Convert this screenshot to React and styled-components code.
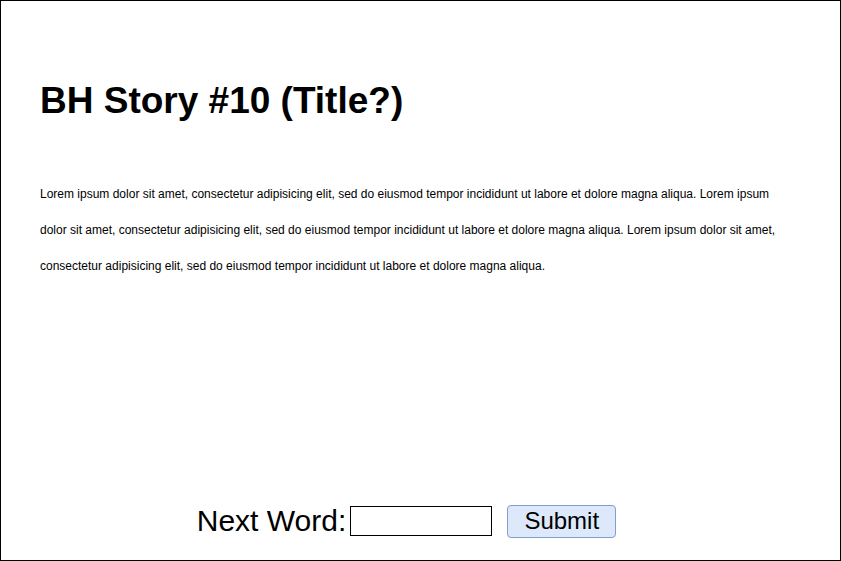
import React from "react";
import styled, { createGlobalStyle } from "styled-components";

const GlobalStyle = createGlobalStyle`
  html, body {
    margin: 0;
    padding: 0;
    background: #fff;
  }
  body {
    font-family: "Liberation Sans", Arial, sans-serif;
    color: #000;
  }
`;

const story =
  "Lorem ipsum dolor sit amet, consectetur adipisicing elit, sed do eiusmod tempor incididunt ut labore et dolore magna aliqua. Lorem ipsum dolor sit amet, consectetur adipisicing elit, sed do eiusmod tempor incididunt ut labore et dolore magna aliqua. Lorem ipsum dolor sit amet, consectetur adipisicing elit, sed do eiusmod tempor incididunt ut labore et dolore magna aliqua.";

function App() {
  return (
    <>
      <GlobalStyle />
      <StoryPage>
        <StoryTitle>BH Story #10 (Title?)</StoryTitle>
        <StoryText>{story}</StoryText>
        <WordForm onSubmit={(e) => e.preventDefault()}>
          <WordLabel htmlFor="next-word">Next Word:</WordLabel>
          <WordInput id="next-word" type="text" />
          <SubmitButton type="submit">Submit</SubmitButton>
        </WordForm>
      </StoryPage>
    </>
  );
}

export default App;

const StoryPage = styled.div`
  box-sizing: border-box;
  width: 841px;
  height: 561px;
  border: 1px solid #000;
  padding: 0 40px 0 39px;
  display: flex;
  flex-direction: column;
`;

const StoryTitle = styled.h1`
  margin: 79px 0 0;
  font-size: 37px;
  font-weight: bold;
  line-height: 42px;
`;

const StoryText = styled.p`
  max-width: 745px;
  margin: 54px 0 0;
  font-size: 12px;
  line-height: 36px;
`;

const WordForm = styled.form`
  margin-top: auto;
  margin-bottom: 22px;
  display: flex;
  align-items: center;
  justify-content: center;
  padding-right: 27px;
`;

const WordLabel = styled.label`
  font-size: 30px;
  line-height: 34px;
`;

const WordInput = styled.input`
  box-sizing: border-box;
  width: 142px;
  height: 30px;
  margin: 0 15px 0 4px;
  border: 1px solid #000;
  padding: 0 4px;
  font-size: 16px;
  outline: none;
`;

const SubmitButton = styled.button`
  box-sizing: border-box;
  width: 109px;
  height: 33px;
  border: 1px solid #7f9fcf;
  border-radius: 4px;
  background: #dde9fb;
  font-family: "Liberation Sans", Arial, sans-serif;
  font-size: 24px;
  color: #000;
  padding: 0;
`;
